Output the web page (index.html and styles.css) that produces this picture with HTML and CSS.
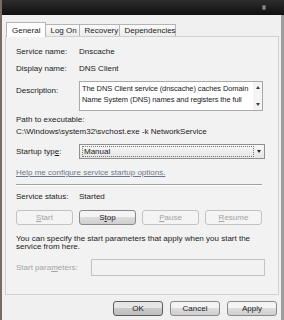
FILE: index.html
```html
<!DOCTYPE html>
<html lang="en">
<head>
    <meta charset="UTF-8">
    <title>DNS Client Properties</title>
    <link rel="stylesheet" href="styles.css">
</head>
<body>
    <div class="window">
        <div class="titlebar">
            <span class="title-btn"></span>
        </div>

        <div class="client">
            <div class="tabs">
                <span class="tab tab-active">General</span>
                <span class="tab">Log On</span>
                <span class="tab">Recovery</span>
                <span class="tab">Dependencies</span>
            </div>

            <div class="panel">
                <div class="row">
                    <span class="label">Service name:</span>
                    <span class="value">Dnscache</span>
                </div>
                <div class="row">
                    <span class="label">Display name:</span>
                    <span class="value">DNS Client</span>
                </div>
                <div class="row row-desc">
                    <span class="label label-desc">Description:</span>
                    <div class="desc-box">
                        <div class="desc-clip">
                            <div class="desc-text">The DNS Client service (dnscache) caches Domain Name System (DNS) names and registers the full</div>
                        </div>
                        <div class="scrollbar">
                            <span class="arrow-up"></span>
                            <span class="arrow-down"></span>
                        </div>
                    </div>
                </div>

                <div class="path-label">Path to executable:</div>
                <div class="path-value">C:\Windows\system32\svchost.exe -k NetworkService</div>

                <div class="row row-startup">
                    <span class="label">Startup typ<u>e</u>:</span>
                    <div class="select">
                        <span class="select-text">Manual</span>
                        <span class="select-arrow"></span>
                    </div>
                </div>

                <a class="help-link" href="#">Help me configure service startup options.</a>

                <div class="separator"></div>

                <div class="row row-status">
                    <span class="label">Service status:</span>
                    <span class="value">Started</span>
                </div>

                <div class="service-buttons">
                    <span class="btn btn-disabled"><u>S</u>tart</span>
                    <span class="btn">S<u>t</u>op</span>
                    <span class="btn btn-disabled"><u>P</u>ause</span>
                    <span class="btn btn-disabled"><u>R</u>esume</span>
                </div>

                <p class="hint">You can specify the start parameters that apply when you start the service from here.</p>

                <div class="row row-params">
                    <span class="label label-params">Start para<u>m</u>eters:</span>
                    <div class="input"></div>
                </div>
            </div>

            <div class="footer">
                <span class="btn btn-default">OK</span>
                <span class="btn">Cancel</span>
                <span class="btn">Apply</span>
            </div>
        </div>
    </div>
</body>
</html>
```

FILE: styles.css
```css
:root {
    --window-bg: #f0f0f0;
    --text-color: #1a1a1a;
    --disabled-color: #a3a3a3;
    --border-color: #b4b4b4;
    --button-border: #8a8a8a;
}

* {
    margin: 0;
    padding: 0;
    box-sizing: border-box;
}

body {
    width: 284px;
    height: 320px;
    overflow: hidden;
    background: #7a6a66;
    font-family: 'Liberation Sans', Arial, sans-serif;
    font-size: 8px;
    line-height: 10px;
    color: var(--text-color);
}

.window {
    display: flex;
    flex-direction: column;
    height: 320px;
    margin-left: 2px;
    background: #9c9c9c;
    padding-right: 3px;
}

.titlebar {
    height: 15px;
    margin-right: -3px;
    background: linear-gradient(#2c2c2c, #101010);
    display: flex;
    justify-content: flex-end;
    padding: 5px 18px 0 0;
}

.title-btn {
    width: 4px;
    height: 5px;
    background: #8c8c8c;
    border: 1px solid #5a5a5a;
}

.client {
    flex: 1;
    background: var(--window-bg);
    padding: 7px 3px 0 3px;
}

/* Tabs */
.tabs {
    display: flex;
    align-items: flex-end;
    height: 14px;
    padding-left: 1px;
    position: relative;
    z-index: 1;
}

.tab {
    height: 12px;
    padding: 0 4px;
    line-height: 11px;
    white-space: nowrap;
    border: 1px solid var(--border-color);
    border-bottom: none;
    margin-right: -1px;
    background: linear-gradient(#fbfbfb, #ececec);
}

.tab-active {
    height: 15px;
    margin-bottom: -1px;
    padding: 2px 5px 0;
    background: #fff;
}

.tab:nth-child(2) { width: 35px; }
.tab:nth-child(3) { width: 41px; }
.tab:nth-child(4) { width: 57px; }

/* Panel */
.panel {
    height: 259px;
    width: 274px;
    border: 1px solid #d0d0d0;
    background: #f2f2f2;
    padding: 10px 13px 0 10px;
}

.row {
    display: flex;
    align-items: center;
    height: 10px;
    margin-bottom: 7px;
}

.label {
    width: 63px;
    flex-shrink: 0;
}

.row-desc {
    height: 30px;
    align-items: flex-start;
    margin-bottom: 4px;
}

.label-desc {
    padding-top: 5px;
}

.desc-box {
    flex: 1;
    height: 30px;
    display: flex;
    border: 1px solid #a8a8a8;
    background: #fff;
    margin-right: 2px;
}

.desc-clip {
    flex: 1;
    height: 23px;
    margin-top: 1px;
    overflow: hidden;
}

.desc-text {
    padding: 0 1px 0 2px;
    font-size: 7.5px;
    line-height: 11px;
    letter-spacing: -0.1px;
}

.scrollbar {
    width: 9px;
    display: flex;
    flex-direction: column;
    justify-content: space-between;
    align-items: center;
    padding: 4px 0;
    background: #f4f4f4;
}

.arrow-up,
.arrow-down {
    width: 0;
    height: 0;
    border-left: 2px solid transparent;
    border-right: 2px solid transparent;
}

.arrow-up { border-bottom: 3px solid #3a3a3a; }
.arrow-down { border-top: 3px solid #3a3a3a; }

.path-label {
    height: 12px;
}

.path-value {
    height: 10px;
    margin-bottom: 7px;
}

.row-startup {
    height: 15px;
    margin-bottom: 9px;
}

.select {
    flex: 1;
    height: 15px;
    display: flex;
    align-items: center;
    justify-content: space-between;
    border: 1px solid #8f8f8f;
    background: linear-gradient(#f7f7f7, #e6e6e6);
    padding-left: 2px;
}

.select-text {
    border: 1px dotted #777;
    flex: 1;
    height: 11px;
    line-height: 9px;
    padding-left: 1px;
}

.select-arrow {
    width: 10px;
    display: flex;
    justify-content: center;
}

.select-arrow::after {
    content: '';
    border-left: 2px solid transparent;
    border-right: 2px solid transparent;
    border-top: 3px solid #222;
}

.help-link {
    display: block;
    height: 10px;
    color: #6f7690;
    text-decoration: underline;
}

.separator {
    height: 2px;
    background: #a0a0a0;
    margin: 6px 3px 6px 0;
    border-bottom: 1px solid #fff;
}

.row-status {
    margin-bottom: 8px;
}

.service-buttons {
    display: flex;
    gap: 6px;
    margin-bottom: 10px;
}

.btn {
    display: flex;
    align-items: center;
    justify-content: center;
    width: 57px;
    height: 15px;
    border: 1px solid var(--button-border);
    border-radius: 3px;
    background: linear-gradient(#f4f4f4 45%, #dcdcdc 50%, #cfcfcf);
}

.btn-disabled {
    color: var(--disabled-color);
    border-color: #c2c2c2;
    background: #f4f4f4;
}

.hint {
    line-height: 8px;
    margin-bottom: 8px;
}

.row-params {
    height: 17px;
}

.label-params {
    width: 75px;
    color: var(--disabled-color);
}

.input {
    flex: 1;
    height: 17px;
    border: 1px solid #c4c4c4;
    background: #f2f2f2;
}

/* Dialog buttons */
.footer {
    display: flex;
    justify-content: flex-end;
    gap: 7px;
    padding-top: 6px;
    padding-right: 1px;
}

.footer .btn {
    width: 50px;
}

.btn-default {
    border-color: #5c5c5c;
    background: linear-gradient(#e6e6e6 45%, #cacaca 50%, #bdbdbd);
}
```
